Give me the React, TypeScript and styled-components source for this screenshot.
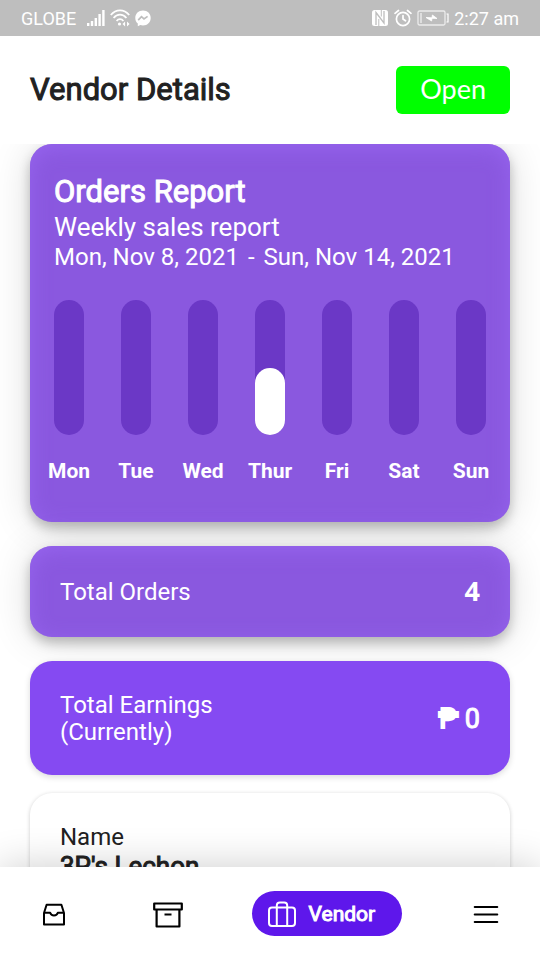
import React from "react";
import styled, { createGlobalStyle, css } from "styled-components";

const GlobalStyle = createGlobalStyle`
  * { box-sizing: border-box; }
  body {
    margin: 0;
    background: #fff;
    color: #212121;
    font-family: Roboto, "Liberation Sans", sans-serif;
  }
  h1, h2, p, dl, dt, dd { margin: 0; padding: 0; }
  button { font: inherit; border: 0; cursor: pointer; }
`;

const heavy = css`
  font-weight: 400;
  -webkit-text-stroke: 1px currentColor;
`;

const Screen = styled.div`
  display: flex;
  flex-direction: column;
  height: 100vh;
  overflow: hidden;
`;

const StatusBar = styled.div`
  display: flex;
  flex: none;
  justify-content: space-between;
  align-items: center;
  height: 36px;
  padding: 0 21px;
  background: #bebebe;
  color: #fff;
  font-size: 18px;
`;

const StatusGroup = styled.div`
  display: flex;
  align-items: center;
  gap: 5px;
`;

const Carrier = styled.span`
  margin-right: 6px;
`;

const Header = styled.header`
  display: flex;
  flex: none;
  justify-content: space-between;
  align-items: center;
  padding: 30px;
`;

const Title = styled.h1`
  ${heavy}
  font-size: 31px;
  line-height: 40px;
`;

const OpenButton = styled.button`
  height: 48px;
  padding: 0 24px 3px;
  border-radius: 6px;
  background: #00ff00;
  color: #fff;
  font-family: Lato, sans-serif;
  font-size: 27px;
`;

const Main = styled.main`
  display: flex;
  flex: 1;
  flex-direction: column;
  gap: 24px;
  min-height: 0;
  padding: 0 30px 24px;
  overflow-y: auto;
  scrollbar-width: none;
`;

const raised = css`
  background: #8a58df;
  box-shadow: inset 0 4px 20px #9664ee, 0 6px 12px rgba(0, 0, 0, 0.24),
    0 3px 40px rgba(0, 0, 0, 0.14);
`;

const ReportCard = styled.section`
  ${raised}
  flex: none;
  padding: 28px 24px 39px;
  border-radius: 22px;
  color: #fff;
`;

const ReportTitle = styled.h2`
  ${heavy}
  font-size: 31px;
  line-height: 40px;
`;

const ReportSubtitle = styled.p`
  font-size: 26px;
  line-height: 30px;
`;

const ReportRange = styled.p`
  display: flex;
  gap: 9px;
  font-size: 24px;
  line-height: 30px;
  white-space: nowrap;
`;

const Chart = styled.div`
  display: flex;
  justify-content: space-between;
  margin-top: 28px;
`;

const Day = styled.div`
  display: flex;
  flex-direction: column;
  align-items: center;
  gap: 24px;
  width: 30px;
`;

const Track = styled.div`
  display: flex;
  align-items: flex-end;
  width: 100%;
  height: 135px;
  border-radius: 15px;
  background: #6b38c6;
`;

const Fill = styled.div`
  width: 100%;
  border-radius: 15px;
  background: #fff;
`;

const DayLabel = styled.span`
  font-size: 21px;
  font-weight: 700;
  line-height: 24px;
`;

const StatCard = styled.section<{ $raised?: boolean }>`
  display: flex;
  flex: none;
  justify-content: space-between;
  align-items: center;
  padding: 31px 30px 29px;
  border-radius: 22px;
  background: #854af2;
  box-shadow: 0 2px 6px rgba(0, 0, 0, 0.15);
  color: #fff;
  ${(p) => p.$raised && raised}
`;

const StatLabel = styled.p`
  max-width: 180px;
  font-size: 24px;
  line-height: 27px;
`;

const StatValue = styled.p`
  ${heavy}
  font-size: 27px;
  line-height: 31px;
`;

const Count = styled.p`
  padding-bottom: 4px;
  font-family: "Noto Sans", sans-serif;
  font-size: 27px;
  font-weight: 700;
  line-height: 27px;
`;

const Peso = styled.span`
  -webkit-text-stroke: 2px currentColor;
`;

const DetailsCard = styled.dl`
  flex: none;
  margin-top: -6px;
  padding: 31px 30px;
  border-radius: 22px;
  background: #fff;
  box-shadow: 0 1px 4px rgba(0, 0, 0, 0.2);
`;

const Term = styled.dt`
  font-size: 24px;
  line-height: 27px;
`;

const Detail = styled.dd`
  ${heavy}
  font-size: 26px;
  line-height: 30px;
`;

const Nav = styled.nav`
  position: relative;
  display: flex;
  flex: none;
  justify-content: space-between;
  align-items: center;
  height: 93px;
  padding: 0 38px;
  background: #fff;
  box-shadow: 0 0 40px rgba(0, 0, 0, 0.2);
`;

const NavButton = styled.button`
  display: flex;
  padding: 0;
  background: none;
  color: #000;
`;

const FirstNavButton = styled(NavButton)`
  padding-right: 14px;
`;

const ActiveNavButton = styled(NavButton)`
  align-items: center;
  gap: 12px;
  height: 45px;
  padding: 0 27px 0 15px;
  border-radius: 23px;
  background: #5e17eb;
  color: #fff;
  font-size: 21px;
`;

const NavText = styled.span`
  ${heavy}
`;

const SignalIcon = () => (
  <svg width="18" height="18" viewBox="0 0 18 18" fill="#fff" aria-hidden="true">
    <rect x="0" y="14" width="2.4" height="3" />
    <rect x="3.8" y="12" width="2.4" height="5" />
    <rect x="7.6" y="9" width="2.4" height="8" />
    <rect x="11.4" y="5" width="2.4" height="12" />
    <rect x="15.2" y="1" width="2.4" height="16" />
  </svg>
);

const WifiIcon = () => (
  <svg width="20" height="18" viewBox="0 0 20 18" fill="none" stroke="#fff" strokeWidth="1.8" aria-hidden="true">
    <path d="M.8 6C6-.2 14-.2 19.2 6M3.6 9c3.6-4.4 9.2-4.4 12.8 0M6.6 12c1.9-2.4 4.9-2.4 6.8 0" />
    <circle cx="9.5" cy="15" r="1.6" fill="#fff" stroke="none" />
    <path d="m12.5 15 2.6-2.5v5zM19.6 15 17 12.5v5z" fill="#fff" stroke="none" />
  </svg>
);

const MessengerIcon = () => (
  <svg width="16" height="17" viewBox="0 0 16 17" aria-hidden="true">
    <path d="M8 .5C3.5.5.3 3.7.3 7.9c0 2.3.9 4.2 2.5 5.6v2.7L5.3 15c.8.2 1.7.4 2.7.4 4.5 0 7.7-3.2 7.7-7.5S12.5.5 8 .5z" fill="#fff" />
    <path d="m3.2 10.2 3.3-3.5L9 8.9l3.6-2.5" fill="none" stroke="#bebebe" strokeWidth="1.7" />
  </svg>
);

const NfcIcon = () => (
  <svg width="18" height="18" viewBox="0 0 18 18" aria-hidden="true">
    <rect x="1" y="1" width="16" height="16" rx="2.5" fill="#fff" />
    <path d="M5 16V3.5L13 14V2" fill="none" stroke="#bebebe" strokeWidth="1.3" />
    <path d="M7.8 17v-7M10.3 1v6.5" stroke="#bebebe" strokeWidth="1" />
  </svg>
);

const AlarmIcon = () => (
  <svg width="18" height="18" viewBox="0 0 18 18" fill="none" stroke="#fff" strokeWidth="1.7" strokeLinecap="round" aria-hidden="true">
    <circle cx="9" cy="10" r="6.6" />
    <path d="M9 6.5V10l2.5 1.8M1 4.3l3.5-2.8M17 4.3l-3.5-2.8" />
  </svg>
);

const BatteryIcon = () => (
  <svg width="32" height="16" viewBox="0 0 32 16" aria-hidden="true">
    <rect x="1" y="1" width="27" height="14" rx="1.5" fill="none" stroke="#ececec" strokeWidth="1.3" />
    <rect x="3" y="3" width="2" height="10" fill="#dedede" />
    <path d="M29.5 4H31v8h-1.5" fill="none" stroke="#fff" strokeWidth="1.2" />
    <path d="m9 7.5 6 .3.4-2.8L20 8.5l-5-.2-.4 2.7z" fill="#fff" stroke="#fff" strokeWidth=".8" />
  </svg>
);

const TrayIcon = () => (
  <svg width="32" height="32" viewBox="0 0 32 32" fill="none" stroke="currentColor" strokeWidth="2" strokeLinejoin="round" aria-hidden="true">
    <path d="M6 15 8.6 6.8h14.800L26 15v11.500H6z" />
    <path d="M6 14.800h6.200c.5 1.700 2 2.700 3.800 2.700s3.300-1 3.800-2.700H26" />
  </svg>
);

const ArchiveIcon = () => (
  <svg width="32" height="32" viewBox="0 0 32 32" fill="none" stroke="currentColor" strokeWidth="2.2" strokeLinejoin="round" aria-hidden="true">
    <path d="M2.2 5.5h27.600v6H2.200zM4.600 11.500h22.800v17H4.600zM12.500 16.500h7" />
  </svg>
);

const SuitcaseIcon = () => (
  <svg width="30" height="30" viewBox="0 0 30 30" fill="none" stroke="currentColor" strokeWidth="2" strokeLinejoin="round" aria-hidden="true">
    <rect x="2" y="8.5" width="26" height="18.5" rx="3" />
    <path d="M9.8 27V6.500a3 3 0 0 1 3-3h4.400a3 3 0 0 1 3 3V27" />
  </svg>
);

const MenuIcon = () => (
  <svg width="32" height="32" viewBox="0 0 32 32" fill="none" stroke="currentColor" strokeWidth="2.2" strokeLinecap="round" aria-hidden="true">
    <path d="M4.800 9h22.400M4.800 16.500h22.400M4.800 24h22.400" />
  </svg>
);

const week = [
  { day: "Mon", share: 0 },
  { day: "Tue", share: 0 },
  { day: "Wed", share: 0 },
  { day: "Thur", share: 50 },
  { day: "Fri", share: 0 },
  { day: "Sat", share: 0 },
  { day: "Sun", share: 0 },
];

export default function App() {
  return (
    <Screen>
      <GlobalStyle />
      <StatusBar>
        <StatusGroup>
          <Carrier>GLOBE</Carrier>
          <SignalIcon />
          <WifiIcon />
          <MessengerIcon />
        </StatusGroup>
        <StatusGroup>
          <NfcIcon />
          <AlarmIcon />
          <BatteryIcon />
          <span>2:27 am</span>
        </StatusGroup>
      </StatusBar>
      <Header>
        <Title>Vendor Details</Title>
        <OpenButton type="button">Open</OpenButton>
      </Header>
      <Main>
        <ReportCard>
          <ReportTitle>Orders Report</ReportTitle>
          <ReportSubtitle>Weekly sales report</ReportSubtitle>
          <ReportRange>
            <span>Mon, Nov 8, 2021</span>
            <span>-</span>
            <span>Sun, Nov 14, 2021</span>
          </ReportRange>
          <Chart>
            {week.map(({ day, share }) => (
              <Day key={day}>
                <Track>
                  <Fill style={{ height: `${share}%` }} />
                </Track>
                <DayLabel>{day}</DayLabel>
              </Day>
            ))}
          </Chart>
        </ReportCard>
        <StatCard $raised>
          <StatLabel>Total Orders</StatLabel>
          <Count>4</Count>
        </StatCard>
        <StatCard>
          <StatLabel>Total Earnings (Currently)</StatLabel>
          <StatValue>
            <Peso>₱</Peso> 0
          </StatValue>
        </StatCard>
        <DetailsCard>
          <Term>Name</Term>
          <Detail>3P's Lechon</Detail>
        </DetailsCard>
      </Main>
      <Nav aria-label="Main">
        <FirstNavButton type="button" aria-label="Inbox">
          <TrayIcon />
        </FirstNavButton>
        <NavButton type="button" aria-label="Archive">
          <ArchiveIcon />
        </NavButton>
        <ActiveNavButton type="button" aria-current="page">
          <SuitcaseIcon />
          <NavText>Vendor</NavText>
        </ActiveNavButton>
        <NavButton type="button" aria-label="Menu">
          <MenuIcon />
        </NavButton>
      </Nav>
    </Screen>
  );
}
